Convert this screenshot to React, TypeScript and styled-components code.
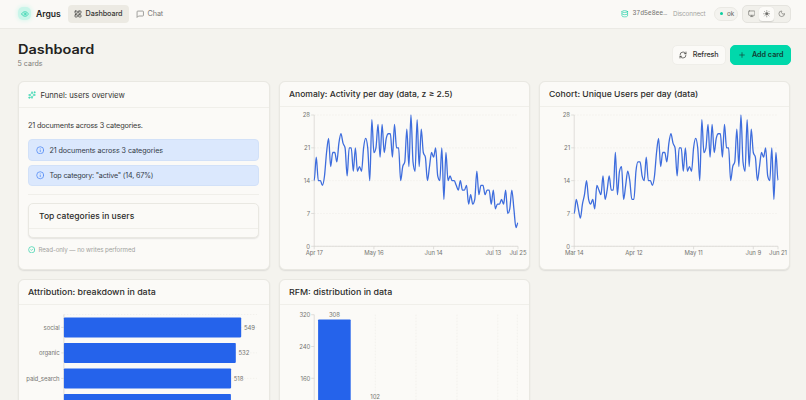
import React from "react";
import styled, { createGlobalStyle } from "styled-components";
import {
  Eye, LayoutGrid, Database, Monitor, Sun, Moon,
  RefreshCw, Plus, Sparkles, Info, CircleCheck,
} from "lucide-react";

const GlobalStyle = createGlobalStyle`
  * { box-sizing: border-box; }
  html, body { margin: 0; height: 400px; overflow: hidden; background: #f4f3ee; }
  body { font-family: Inter, sans-serif; font-size: 7.5px; color: #3a3a38; }
  svg { flex: none; display: block; }
`;

const Screen = styled.div`height: 400px; overflow: hidden;`;
const Header = styled.header`
  display: flex; align-items: center; height: 28.5px; padding: 0 15px 0 18px;
  background: #faf9f6; border-bottom: 1px solid #ebeae5;
`;
const Logo = styled.div`
  display: grid; place-items: center; width: 13px; height: 13px; border-radius: 5px;
  color: #19cfa5; background: #c9f5e9; box-shadow: 0 0 5px #c9f5e9;
`;
const Brand = styled.div`
  width: 32px; margin-left: 5px; font-size: 8.6px; font-weight: 600; color: #252523; white-space: nowrap;
`;
const NavItem = styled.div<{ $active?: boolean }>`
  display: flex; align-items: center; gap: 3.5px; height: 18.5px; padding: 0 6px; border-radius: 4px;
  font-size: 7.25px; font-weight: ${p => (p.$active ? 500 : 400)}; letter-spacing: -0.1px;
  color: ${p => (p.$active ? "#383836" : "#7c7c78")};
  background: ${p => (p.$active ? "#eceae3" : "transparent")};
  width: ${p => (p.$active ? "60.5px" : "auto")};
  & + & { margin-left: 1px; }
`;
const Spacer = styled.div`flex: 1;`;
const Session = styled.div`
  display: flex; align-items: center; gap: 4px; width: 52px; color: #19cfa5;
  span { font: 6.6px "Liberation Mono", monospace; letter-spacing: -0.12px; color: #73736f; white-space: nowrap; }
`;
const Disconnect = styled.div`width: 40.5px; font-size: 6.3px; letter-spacing: -0.1px; color: #a3a39f;`;
const Status = styled.div`
  display: flex; align-items: center; gap: 4px; height: 13.5px; width: 24.5px; padding-left: 5px;
  border: 1px solid #eae9e4; border-radius: 7px; background: #f4f3ef; font-size: 6.4px; color: #686864;
`;
const Dot = styled.i`width: 3.4px; height: 3.4px; border-radius: 50%; background: #0ccf9f;`;
const ThemeSwitch = styled.div`
  display: flex; align-items: center; height: 18px; width: 49px; margin-left: 4px; padding: 1px;
  border: 1px solid #e5e4df; border-radius: 5px; background: #f1f0eb; color: #6d6d69;
`;
const ThemeOption = styled.div<{ $active?: boolean }>`
  display: grid; place-items: center; flex: 1; height: 14.5px; border-radius: 3.5px;
  background: ${p => (p.$active ? "#fcfbf8" : "transparent")};
  box-shadow: ${p => (p.$active ? "0 0.5px 1px #0002" : "none")};
`;
const Main = styled.main`padding: 14px 14.8px 0 17.5px;`;
const PageHead = styled.div`display: flex; align-items: flex-start; height: 38.4px;`;
const Title = styled.h1`
  margin: 0; font-size: 12.8px; line-height: 14px; font-weight: 600; color: #232321;
  transform: scaleX(1.13); transform-origin: left; white-space: nowrap;
`;
const Subtitle = styled.div`margin-top: 2.5px; font-size: 7.1px; line-height: 9px; color: #7c7c78;`;
const Button = styled.button<{ $primary?: boolean }>`
  display: flex; align-items: center; justify-content: center; gap: 6px; height: 20.5px;
  margin: 2px 0 0 4.5px; padding: 0; width: ${p => (p.$primary ? 61 : 54)}px;
  border: 1px solid ${p => (p.$primary ? "#00d8ab" : "#efeee9")}; border-radius: 5px;
  background: ${p => (p.$primary ? "#00d8ab" : "#fbfaf7")};
  font: ${p => (p.$primary ? 600 : 500)} 7.2px Inter, sans-serif; letter-spacing: ${p => (p.$primary ? 0 : -0.12)}px;
  color: ${p => (p.$primary ? "#123e33" : "#333331")};
`;
const Grid = styled.div`
  display: grid; grid-template-columns: 252.2px 251.4px 251.4px; grid-auto-rows: 188.8px; gap: 9px;
`;
const Card = styled.section`
  display: flex; flex-direction: column; min-width: 0; overflow: hidden; border-radius: 6px;
  background: #fbfaf7; border: 1px solid #e9e8e2; box-shadow: 0 1px 1.5px #00000018;
`;
const CardHead = styled.div<{ $tall?: boolean }>`
  display: flex; align-items: center; gap: 4.5px; flex: none; height: ${p => (p.$tall ? 26.5 : 25)}px;
  padding: 0 9.4px; border-bottom: 1px solid #f0efea; font-size: 7.75px; color: #343432;
`;
const CardTitle = styled.h2<{ $stretch: number }>`
  margin: 0; font-size: 8px; font-weight: 550; color: #2c2c2a; white-space: nowrap;
  transform: scaleX(${p => p.$stretch}); transform-origin: left;
`;
const OverviewBody = styled.div`padding: 12.4px 9.4px 0;`;
const Summary = styled.p`
  margin: 0 0 8.6px; font-size: 7.3px; line-height: 10px; letter-spacing: -0.16px; color: #393937;
`;
const Insight = styled.div`
  display: flex; align-items: center; gap: 5px; height: 21.5px; margin-bottom: 4px; padding-left: 7px;
  border: 1px solid #d2e1f8; border-radius: 4px; background: #dbe8fd;
  font-size: 7.15px; letter-spacing: -0.06px; color: #343b48;
  & + & { letter-spacing: -0.18px; }
  svg { color: #4583f5; }
`;
const Rule = styled.div`height: 1px; margin-top: 8px; background: #f0efea;`;
const InnerCard = styled(Card)`
  height: 35px; margin-top: 8px; border-radius: 5px;
  ${CardHead} { padding-left: 10.4px; }
`;
const Footnote = styled.div`
  display: flex; align-items: center; gap: 3px; margin-top: 7.2px; font-size: 6.2px; letter-spacing: -0.08px; color: #a2a29e;
  svg { color: #22cda4; }
`;
const Plot = styled.svg`
  width: 249px; height: 162px; margin-top: 0.6px; overflow: hidden;
  text { font: 6px Inter, sans-serif; letter-spacing: -0.08px; fill: #767672; }
  .grid { stroke: #ecebe6; stroke-width: 0.6; stroke-dasharray: 1.5 1.5; }
  .axis { stroke: #d4d3ce; stroke-width: 0.7; }
`;

const ChatIcon = () => (
  <svg width="8.5" height="8.5" viewBox="0 0 24 24" fill="none" stroke="currentColor" strokeWidth="2" strokeLinejoin="round">
    <path d="M21 15a2 2 0 0 1-2 2H7l-4 4V5a2 2 0 0 1 2-2h14a2 2 0 0 1 2 2z" />
  </svg>
);

// Daily totals starting Mar 14; each chart takes a hundred-day window.
const daily = [
  7, 10, 8, 6, 9, 11, 14, 10, 9, 10, 8, 13, 12, 11, 15, 10, 12, 15, 12, 12, 20, 11, 16, 17, 10, 13, 16, 14, 10, 10, 16, 18, 18, 15,
  14, 19, 14, 14, 13, 15, 20, 23, 17, 20, 20, 18, 22, 24, 22, 21, 15, 21, 21, 16, 21, 16, 17, 16, 21, 23, 21, 14, 27, 20, 21, 26,
  19, 26, 20, 23, 24, 24, 19, 26, 21, 21, 14, 17, 18, 25, 17, 28, 18, 16, 27, 17, 25, 20, 19, 14, 17, 20, 19, 21, 15, 14, 21, 10,
  20, 14, 15, 14, 14, 13, 12, 14, 12, 12, 13, 9, 11, 9, 10, 16, 11, 13, 13, 11, 12, 12, 9, 12, 8, 9, 9, 10, 9, 12, 7, 8, 12, 8, 4, 5,
];

const LEFT = 34.2, WIDTH = 203.8, TOP = 8, BOTTOM = 139.3;

function monotonePath(values: number[]): string {
  const step = WIDTH / (values.length - 1);
  const ys = values.map(v => BOTTOM - (v / 28) * (BOTTOM - TOP));
  const slope = ys.map((y, i) => {
    if (i === 0 || i === ys.length - 1) return 0;
    const a = (y - ys[i - 1]) / step;
    const b = (ys[i + 1] - y) / step;
    if (a * b <= 0) return 0;
    return Math.sign(a) * 2 * Math.min(Math.abs(a), Math.abs(b), Math.abs(a + b) / 4);
  });
  return ys.map((y, i) => {
    const x = LEFT + i * step;
    if (i === 0) return `M${x},${y}`;
    const h = step / 3;
    return `C${x - step + h},${ys[i - 1] + slope[i - 1] * h} ${x - h},${y - slope[i] * h} ${x},${y}`;
  }).join("");
}

function LineChart({ values, labels }: { values: number[]; labels: [number, string][] }) {
  return (
    <Plot>
      {[0, 7, 14, 21, 28].map(v => {
        const y = BOTTOM - (v / 28) * (BOTTOM - TOP);
        return (
          <g key={v}>
            <line className="grid" x1={LEFT} x2={LEFT + WIDTH} y1={y} y2={y} />
            <line className="axis" x1={LEFT - 3} x2={LEFT} y1={y} y2={y} />
            <text x={LEFT - 4.2} y={y + 2.2} textAnchor="end">{v}</text>
          </g>
        );
      })}
      <path className="axis" fill="none" d={`M${LEFT},${TOP}V${BOTTOM}H${LEFT + WIDTH}`} />
      {labels.map(([day, text]) => {
        const x = LEFT + (day / 99) * WIDTH;
        return (
          <g key={text}>
            <line className="axis" x1={x} x2={x} y1={BOTTOM} y2={BOTTOM + 3} />
            <text x={x} y={BOTTOM + 8.5} textAnchor="middle">{text}</text>
          </g>
        );
      })}
      <path d={monotonePath(values)} fill="none" stroke="#3e6ddd" strokeWidth={1.3} />
    </Plot>
  );
}

const sources: [string, number | null, number][] = [
  ["social", 549, 177.3], ["organic", 532, 171.9], ["paid_search", 518, 167.2], ["", null, 167],
];

function SourceBars() {
  return (
    <Plot>
      <line className="grid" x1={44.9} x2={238} y1={9.5} y2={9.5} />
      <line className="axis" x1={44.9} x2={44.9} y1={9.5} y2={162} />
      {sources.map(([name, count, width], i) => {
        const y = 12.4 + i * 25.5;
        return (
          <g key={i}>
            <line className="grid" x1={44.9} x2={238} y1={y + 10} y2={y + 10} />
            <line className="axis" x1={42.2} x2={44.9} y1={y + 10} y2={y + 10} />
            <rect x={44.9} y={y} width={width} height={20} rx={0.8} fill="#2563eb" />
            <text x={40.6} y={y + 12.2} textAnchor="end">{name}</text>
            {count && <text x={44.9 + width + 2.7} y={y + 12.2}>{count}</text>}
          </g>
        );
      })}
    </Plot>
  );
}

function DistributionBars() {
  return (
    <Plot>
      {[95.3, 136, 177, 217.8, 237.3].map(x => (
        <line key={x} className="grid" x1={x} x2={x} y1={9.7} y2={137} />
      ))}
      <line className="axis" x1={34.2} x2={34.2} y1={9.7} y2={137} />
      {[320, 240, 160].map((v, i) => (
        <g key={v}>
          <line className="axis" x1={31.2} x2={34.2} y1={9.7 + i * 31.8} y2={9.7 + i * 31.8} />
          <text x={30.3} y={12 + i * 31.8} textAnchor="end">{v}</text>
        </g>
      ))}
      <rect x={38.1} y={14.5} width={32.6} height={122.5} rx={0.8} fill="#2563eb" />
      <rect x={78.8} y={96.5} width={32.6} height={40.5} rx={0.8} fill="#2563eb" />
      <text x={54.4} y={12} textAnchor="middle">308</text>
      <text x={95.1} y={94} textAnchor="middle">102</text>
    </Plot>
  );
}

export default function App() {
  return (
    <Screen>
      <GlobalStyle />
      <Header>
        <Logo><Eye size={8} /></Logo>
        <Brand>Argus</Brand>
        <NavItem $active><LayoutGrid size={8} />Dashboard</NavItem>
        <NavItem><ChatIcon />Chat</NavItem>
        <Spacer />
        <Session><Database size={7.5} /><span>37d5e8ee…</span></Session>
        <Disconnect>Disconnect</Disconnect>
        <Status><Dot />ok</Status>
        <ThemeSwitch>
          <ThemeOption><Monitor size={7.5} /></ThemeOption>
          <ThemeOption $active><Sun size={7.5} fill="currentColor" /></ThemeOption>
          <ThemeOption><Moon size={7.5} /></ThemeOption>
        </ThemeSwitch>
      </Header>
      <Main>
        <PageHead>
          <div>
            <Title>Dashboard</Title>
            <Subtitle>5 cards</Subtitle>
          </div>
          <Spacer />
          <Button><RefreshCw size={8} />Refresh</Button>
          <Button $primary><Plus size={8} />Add card</Button>
        </PageHead>
        <Grid>
          <Card>
            <CardHead $tall><Sparkles size={8} color="#19d1a6" />Funnel: users overview</CardHead>
            <OverviewBody>
              <Summary>21 documents across 3 categories.</Summary>
              <Insight><Info size={8.5} />21 documents across 3 categories</Insight>
              <Insight><Info size={8.5} />Top category: "active" (14, 67%)</Insight>
              <Rule />
              <InnerCard>
                <CardHead><CardTitle $stretch={1.065}>Top categories in users</CardTitle></CardHead>
              </InnerCard>
              <Footnote><CircleCheck size={7.5} />Read-only — no writes performed</Footnote>
            </OverviewBody>
          </Card>
          <Card>
            <CardHead><CardTitle $stretch={1.065}>Anomaly: Activity per day (data, z ≥ 2.5)</CardTitle></CardHead>
            <LineChart
              values={daily.slice(34)}
              labels={[[0, "Apr 17"], [29, "May 16"], [58, "Jun 14"], [87, "Jul 13"], [99, "Jul 25"]]}
            />
          </Card>
          <Card>
            <CardHead><CardTitle $stretch={1.08}>Cohort: Unique Users per day (data)</CardTitle></CardHead>
            <LineChart
              values={daily.slice(0, 100)}
              labels={[[0, "Mar 14"], [29, "Apr 12"], [58, "May 11"], [87, "Jun 9"], [99, "Jun 21"]]}
            />
          </Card>
          <Card>
            <CardHead><CardTitle $stretch={1.11}>Attribution: breakdown in data</CardTitle></CardHead>
            <SourceBars />
          </Card>
          <Card>
            <CardHead><CardTitle $stretch={1.11}>RFM: distribution in data</CardTitle></CardHead>
            <DistributionBars />
          </Card>
        </Grid>
      </Main>
    </Screen>
  );
}
